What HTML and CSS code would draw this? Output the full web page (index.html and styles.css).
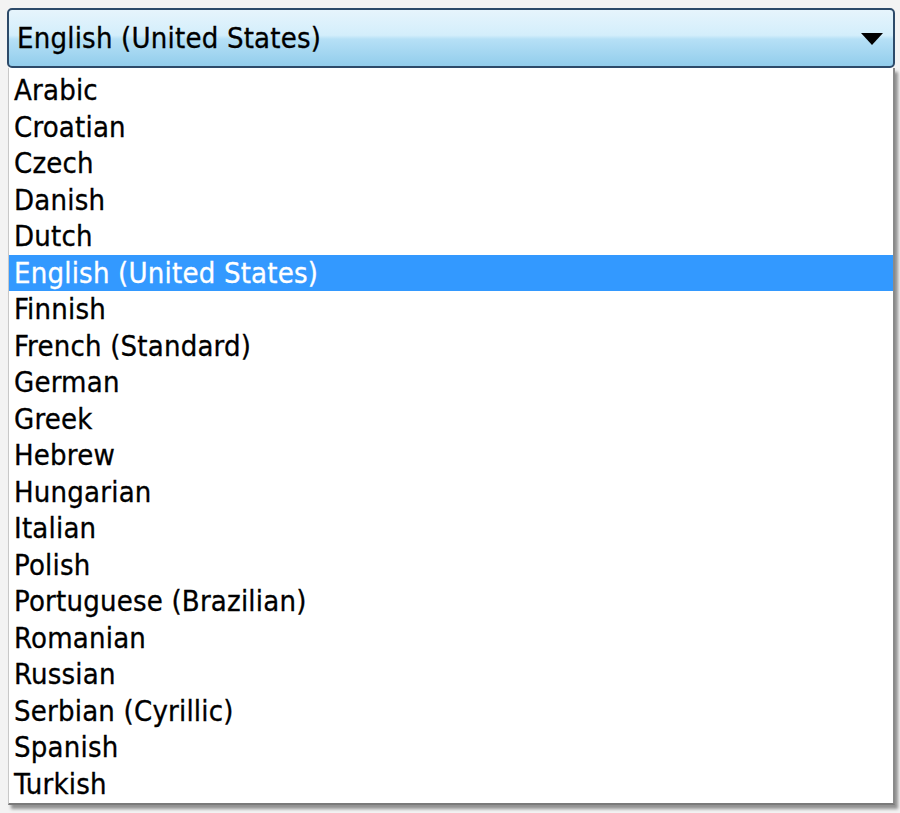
FILE: index.html
```html
<!DOCTYPE html>
<html lang="en">
<head>
<meta charset="utf-8">
<title>Language</title>
<link rel="stylesheet" href="styles.css">
</head>
<body>
<div class="combo">
  <div class="combo-field">
    <span class="combo-value">English (United States)</span>
    <svg class="combo-arrow" width="22" height="12" viewBox="0 0 22 12"><polygon points="0,0 22,0 11,12" fill="#000"/></svg>
  </div>
  <ul class="combo-list">
    <li>Arabic</li>
    <li>Croatian</li>
    <li>Czech</li>
    <li>Danish</li>
    <li>Dutch</li>
    <li class="selected">English (United States)</li>
    <li>Finnish</li>
    <li>French (Standard)</li>
    <li>German</li>
    <li>Greek</li>
    <li>Hebrew</li>
    <li>Hungarian</li>
    <li>Italian</li>
    <li>Polish</li>
    <li>Portuguese (Brazilian)</li>
    <li>Romanian</li>
    <li>Russian</li>
    <li>Serbian (Cyrillic)</li>
    <li>Spanish</li>
    <li>Turkish</li>
  </ul>
</div>
</body>
</html>
```

FILE: styles.css
```css
html, body {
  margin: 0;
  padding: 0;
  background: #f3f3f3;
  width: 900px;
  height: 813px;
  overflow: hidden;
}

body {
  font-family: "DejaVu Sans Condensed", "DejaVu Sans", sans-serif;
  font-size: 29px;
  color: #000;
}

.combo {
  padding: 8px 5px 0 7px;
}

.combo-field {
  height: 56px;
  border: 2px solid #2d4a69;
  border-radius: 5px;
  background: linear-gradient(#e6f4fc 0%, #d3eefb 45%, #b6e0f6 52%, #92cdec 100%);
  display: flex;
  align-items: center;
  justify-content: space-between;
  padding: 0 10px 0 8px;
}

.combo-value {
  letter-spacing: 0.2px;
  -webkit-text-stroke: 0.3px #000;
}

.combo-arrow {
  margin-top: 2px;
}

.combo-list {
  list-style: none;
  margin: 0 0 0 1px;
  padding: 4px 0 1px 0;
  background: #fff;
  border-left: 1px solid #c8c8c8;
  border-right: 2px solid #8a8a8a;
  border-bottom: 2px solid #7a7a7a;
  box-shadow: 3px 4px 3px rgba(0, 0, 0, 0.4);
  width: 884px;
}

.combo-list li {
  height: 36.5px;
  line-height: 36.5px;
  padding-left: 5px;
  letter-spacing: 0.2px;
  white-space: nowrap;
  -webkit-text-stroke: 0.3px currentColor;
}

.combo-list li.selected {
  background: #3399ff;
  color: #fff;
}
```
